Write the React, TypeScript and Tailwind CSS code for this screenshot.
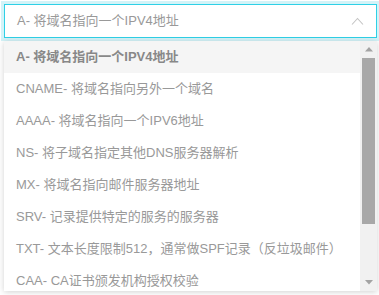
import { useState } from "react";

const RECORD_TYPES = [
  { type: "A", desc: "将域名指向一个IPV4地址" },
  { type: "CNAME", desc: "将域名指向另外一个域名" },
  { type: "AAAA", desc: "将域名指向一个IPV6地址" },
  { type: "NS", desc: "将子域名指定其他DNS服务器解析" },
  { type: "MX", desc: "将域名指向邮件服务器地址" },
  { type: "SRV", desc: "记录提供特定的服务的服务器" },
  { type: "TXT", desc: "文本长度限制512，通常做SPF记录（反垃圾邮件）" },
  { type: "CAA", desc: "CA证书颁发机构授权校验" },
];

const label = (r: { type: string; desc: string }) => `${r.type}- ${r.desc}`;

function ChevronUp() {
  return (
    <svg width="13" height="8" viewBox="0 0 13 8" fill="none">
      <path d="M1 7.5 L6.5 1.5 L12 7.5" stroke="#c4c4c4" strokeWidth="1.1" />
    </svg>
  );
}

function Arrow({ down }: { down?: boolean }) {
  return (
    <div className="flex h-[17px] items-center justify-center">
      <svg width="8" height="5" viewBox="0 0 8 5">
        <path d={down ? "M0 0 H8 L4 4.5 Z" : "M0 4.5 H8 L4 0 Z"} fill="#a3a3a3" />
      </svg>
    </div>
  );
}

function Scrollbar() {
  return (
    <div className="flex w-[17px] shrink-0 flex-col bg-[#f1f1f1]">
      <Arrow />
      <div className="flex flex-1 flex-col px-[2px]">
        <div className="h-[166px] bg-[#a8a8a8]" />
      </div>
      <Arrow down />
    </div>
  );
}

export default function App() {
  const [selected, setSelected] = useState(0);

  return (
    <div
      className="w-[379px] h-[295px] bg-white pt-1 pl-1 pr-[2px]"
      style={{ fontFamily: '"Liberation Sans", "Noto Sans CJK SC", sans-serif' }}
    >
      <div className="flex h-[34px] items-center justify-between border border-[#2fd0e6] bg-white pl-3 pr-3 shadow-[0_0_0_3px_#d3f3f8]">
        <span className="text-[13px] text-[#999]">{label(RECORD_TYPES[selected])}</span>
        <ChevronUp />
      </div>

      <div className="mt-[3px] flex h-[250px] bg-white shadow-[0_1px_6px_rgba(0,0,0,0.18)]">
        <div className="flex-1 overflow-hidden">
          {RECORD_TYPES.map((r, i) => (
            <button
              type="button"
              key={r.type}
              onClick={() => setSelected(i)}
              className={`flex h-8 w-full items-center pl-3 text-left text-[13px] whitespace-nowrap ${
                i === selected ? "bg-[#f5f5f5] font-bold text-[#888]" : "text-[#999]"
              }`}
            >
              {label(r)}
            </button>
          ))}
        </div>
        <Scrollbar />
      </div>
    </div>
  );
}
